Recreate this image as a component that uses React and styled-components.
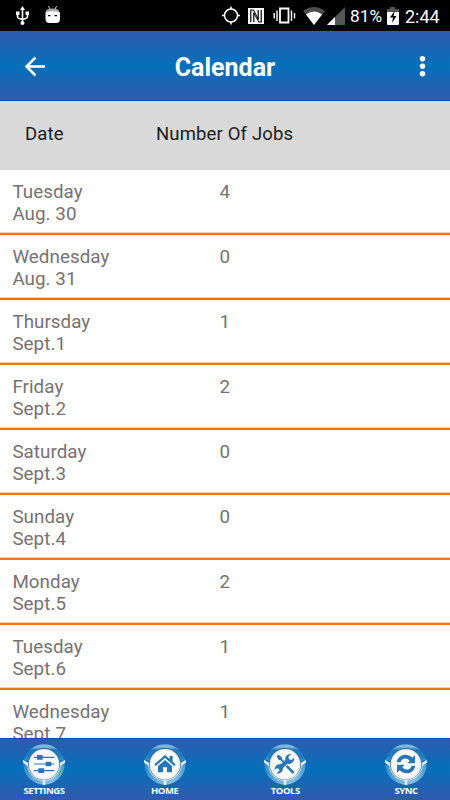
import React from 'react';
import styled, { createGlobalStyle } from 'styled-components';

const GlobalStyle = createGlobalStyle`
    body {
        margin: 0;
        background: #fff;
        font-family: Roboto, sans-serif;
    }
`;

const Screen = styled.div`
    display: flex;
    flex-direction: column;
    width: 450px;
    height: 800px;
    overflow: hidden;
    background: #fff;
`;

const StatusBar = styled.div`
    display: flex;
    flex: none;
    justify-content: space-between;
    height: 31px;
    background: #000;
    color: #fff;
`;

const StatusIcons = styled.svg`
    display: block;
    width: ${props => props.$width}px;
    height: 31px;
`;

const StatusGroup = styled.div`
    display: flex;
    align-items: center;
`;

const StatusText = styled.span`
    width: ${props => props.$width}px;
    padding-top: 2px;
    font-size: ${props => props.$size}px;
    line-height: 29px;
    white-space: nowrap;
`;

const Header = styled.header`
    display: grid;
    flex: none;
    grid-template-columns: 55px 1fr 55px;
    align-items: center;
    box-sizing: border-box;
    height: 70px;
    padding-top: 2px;
    border-bottom: 1px solid #0a4fb0;
    background: linear-gradient(#315aad, #0570ba 50%, #315aad);
    color: #fff;
`;

const IconButton = styled.button`
    display: block;
    height: 40px;
    padding: 0;
    border: 0;
    background: none;

    svg {
        display: block;
        width: 100%;
        height: 40px;
    }
`;

const Title = styled.h1`
    margin: 0;
    padding-top: 3px;
    font-size: 25px;
    font-weight: 700;
    line-height: 30px;
    text-align: center;
`;

const TableHead = styled.div`
    display: flex;
    flex: none;
    box-sizing: border-box;
    height: 69px;
    padding: 22px 0 0 25px;
    background: #d9d9d9;
    color: #1c1c1c;
    font-size: 18.5px;
    line-height: 22px;
    letter-spacing: 0.15px;
`;

const HeadCell = styled.div`
    width: ${props => props.$width}px;
`;

const List = styled.div`
    flex: 1;
    min-height: 0;
    overflow: hidden;
`;

const Row = styled.div`
    display: flex;
    box-sizing: border-box;
    height: 65px;
    padding: 10.5px 0 0 12.4px;
    border-bottom: 2px solid #f97300;
    box-shadow: inset 0 -1px #f8cfae;
    color: #777174;
    font-size: 18.8px;
    line-height: 22.3px;
    letter-spacing: 0.05px;
`;

const DateCell = styled.div`
    width: 207px;
`;

const Footer = styled.nav`
    display: flex;
    flex: none;
    justify-content: space-between;
    box-sizing: border-box;
    height: 62px;
    padding: 4px 14px 0;
    border-top: 1px solid #124fae;
    background: linear-gradient(#315aad, #0570ba 48%, #315aad);
`;

const Tab = styled.button`
    display: flex;
    flex-direction: column;
    align-items: center;
    width: 60px;
    padding: 0;
    border: 0;
    background: none;
    color: #fff;
    font: 700 9.5px/13px 'Open Sans', sans-serif;
    letter-spacing: -0.45px;

    svg {
        display: block;
        width: 42px;
        height: 42px;
        margin-bottom: -1px;
    }
`;

const days = [
    ['Tuesday', 'Aug. 30', 4],
    ['Wednesday', 'Aug. 31', 0],
    ['Thursday', 'Sept.1', 1],
    ['Friday', 'Sept.2', 2],
    ['Saturday', 'Sept.3', 0],
    ['Sunday', 'Sept.4', 0],
    ['Monday', 'Sept.5', 2],
    ['Tuesday', 'Sept.6', 1],
    ['Wednesday', 'Sept.7', 1]
];

const glyphs = {
    SETTINGS: (
        <g stroke="#2876b5" strokeWidth="3.5">
            <path d="M33 43h61M33 63h61M33 83h61" />
            <path fill="#2876b5" stroke="none" d="M42 36h17v14H42zM68 56h17v14H68zM46 76h17v14H46z" />
        </g>
    ),
    HOME: (
        <g fill="#2876b5">
            <path d="M63 36 31 64l4 5 28-24 28 24 4-5-9-8V38h-9v10z" />
            <path d="M63 51 42 69v19h15V73h12v15h15V69z" />
        </g>
    ),
    TOOLS: (
        <g fill="#2876b5">
            <path d="M38 39l6-4 9 7 1 6 9 9-4 4-9-9-6-1z" />
            <path d="M70 66l19 18q3 3 0 6t-6 0L65 71z" />
            <path d="M90 44a15 15 0 0 1-19 18L57 75a15 15 0 0 1-19 16l9-9-3-5-6-1-6 5a15 15 0 0 1 18-17l14-13a15 15 0 0 1 17-18l-8 9 2 7 7 2z" />
        </g>
    ),
    SYNC: (
        <g fill="#2876b5">
            <path d="M35 58C39 34 66 28 82 44l8-7v24H67l7-8c-10-11-23-8-28 5z" />
            <path d="M91 68C87 92 60 98 44 82l-8 7V65h23l-7 8c10 11 23 8 28-5z" />
        </g>
    )
};

const Badge = ({ name }) => (
    <svg viewBox="0 0 126 126">
        <defs>
            <linearGradient id={`top-${name}`} x1="0" y1="0" x2="0" y2="1">
                <stop offset="0" stopColor="#6fb2dd" />
                <stop offset="0.13" stopColor="#7ebbe2" />
                <stop offset="0.28" stopColor="#1a77bb" />
                <stop offset="0.6" stopColor="#1c80c2" />
                <stop offset="1" stopColor="#49b3df" />
            </linearGradient>
            <linearGradient id={`low-${name}`} x1="0" y1="0" x2="1" y2="0">
                <stop offset="0" stopColor="#2d8cca" />
                <stop offset="0.3" stopColor="#69afdc" />
                <stop offset="0.7" stopColor="#86c0e4" />
                <stop offset="1" stopColor="#429ed4" />
            </linearGradient>
            <radialGradient id={`disc-${name}`}>
                <stop offset="0.8" stopColor="#fff" />
                <stop offset="1" stopColor="#e2e5e8" />
            </radialGradient>
        </defs>
        <path fill={`url(#top-${name})`} d="M3 50a62 62 0 0 1 120 0L63 66z" />
        <path fill={`url(#low-${name})`} d="M1 63a62 62 0 0 0 124 0L63 80z" />
        <path fill="#dfeaf3" d="M0 50 20 62h86l20-12v9l-13 9a50 50 0 0 1-46 45v13h-8v-13A50 50 0 0 1 13 68L0 59z" />
        <circle cx="63" cy="63" r="48" fill="#3f6c8d" />
        <circle cx="63" cy="64" r="46" fill={`url(#disc-${name})`} />
        {glyphs[name]}
    </svg>
);

const NoticeIcons = () => (
    <StatusIcons $width={100} viewBox="0 0 100 31">
        <g fill="none" stroke="#fff" strokeWidth="1.6">
            <path d="M22.5 8v15M17.5 13v3.500q0 2 5 3 5-1 5-3V13" />
        </g>
        <path fill="#fff" d="M22.500 6l2.500 4h-5zM16 11.500h3.500v3.500H16zM25.500 11.500H29v3.500h-3.500z" />
        <circle cx="22.500" cy="23" r="2" fill="#fff" />
        <path stroke="#c9c9c9" d="M48.500 6l1.500 3.500M56.500 6l-1.500 3.500" />
        <path fill="#a8a8a8" d="M45.500 12.500q0-4 7-4t7 4z" />
        <path fill="#fff" d="M45.500 12.500q7-2.500 14.500 0V19q0 4-4 4h-6.500q-4 0-4-4z" />
        <path fill="#000" d="M48 15h2.500v1.200H48zM54.500 15H57v1.200h-2.500z" />
    </StatusIcons>
);

const SignalIcons = () => (
    <StatusIcons $width={130} viewBox="220 0 130 31">
        <circle cx="231" cy="15.500" r="6.500" fill="none" stroke="#fff" strokeWidth="1.500" />
        <path stroke="#fff" strokeWidth="1.500" d="M231 6.500v3M231 21.500v3M222 15.500h3M237 15.500h3" />
        <path fill="#fff" d="M248 8h16v16h-16z" />
        <path fill="none" stroke="#000" strokeWidth="1.200" d="M253.500 10H250.800v12M258.500 22h2.700V10" />
        <path fill="none" stroke="#000" strokeWidth="1.200" d="M253.800 22V12.500M258.200 19.500V10" />
        <path stroke="#000" strokeWidth="1" d="M253.500 10l5 9.500M253.800 13l5 9" />
        <path fill="none" stroke="#fff" strokeWidth="1.800" d="M280 8.500h8.500v14H280z" />
        <path stroke="#fff" strokeWidth="1.400" d="M277 10.500v10.500M274.200 13v5.500M291.500 10.500v10.500M294.500 13v5.500" />
        <path fill="#4d4d4d" d="M303 11q11-8 22 0l-11 14z" />
        <path fill="#fff" d="M306 14.500q8-6 16 0L314 25z" />
        <path fill="#555" d="M345 7v18h-18z" />
        <path fill="#fff" d="M335 17v8h-8z" />
    </StatusIcons>
);

const App = () => (
    <>
        <GlobalStyle />
        <Screen>
            <StatusBar>
                <NoticeIcons />
                <StatusGroup>
                    <SignalIcons />
                    <StatusText $width={35} $size={17.3}>81%</StatusText>
                    <StatusIcons $width={20} viewBox="385 0 20 31">
                        <path fill="#555" d="M390 7h5v2h4v4h-12V9h3z" />
                        <path fill="#fff" d="M387 12h12v12q0 1-1 1h-10q-1 0-1-1z" />
                        <path fill="#000" d="M395 10.500l-5 7h3l-1 5.500 4.500-7h-3z" />
                    </StatusIcons>
                    <StatusText $width={45} $size={18}>2:44</StatusText>
                </StatusGroup>
            </StatusBar>
            <Header>
                <IconButton aria-label="Back">
                    <svg viewBox="0 0 55 40" fill="none" stroke="#fff" strokeWidth="2.500">
                        <path d="M45 19.500H27M35.500 10.500 26.500 19.500 35.500 28.500" />
                    </svg>
                </IconButton>
                <Title>Calendar</Title>
                <IconButton aria-label="More options">
                    <svg viewBox="395 0 55 40" fill="#fff">
                        <circle cx="422.500" cy="11.800" r="2.700" />
                        <circle cx="422.500" cy="19.300" r="2.700" />
                        <circle cx="422.500" cy="26.800" r="2.700" />
                    </svg>
                </IconButton>
            </Header>
            <TableHead>
                <HeadCell $width={131}>Date</HeadCell>
                <HeadCell $width={200}>Number Of Jobs</HeadCell>
            </TableHead>
            <List>
                {days.map(([day, date, jobs]) => (
                    <Row key={date}>
                        <DateCell>
                            <div>{day}</div>
                            <div>{date}</div>
                        </DateCell>
                        <div>{jobs}</div>
                    </Row>
                ))}
            </List>
            <Footer>
                {Object.keys(glyphs).map(name => (
                    <Tab key={name}>
                        <Badge name={name} />
                        {name}
                    </Tab>
                ))}
            </Footer>
        </Screen>
    </>
);

export default App;
